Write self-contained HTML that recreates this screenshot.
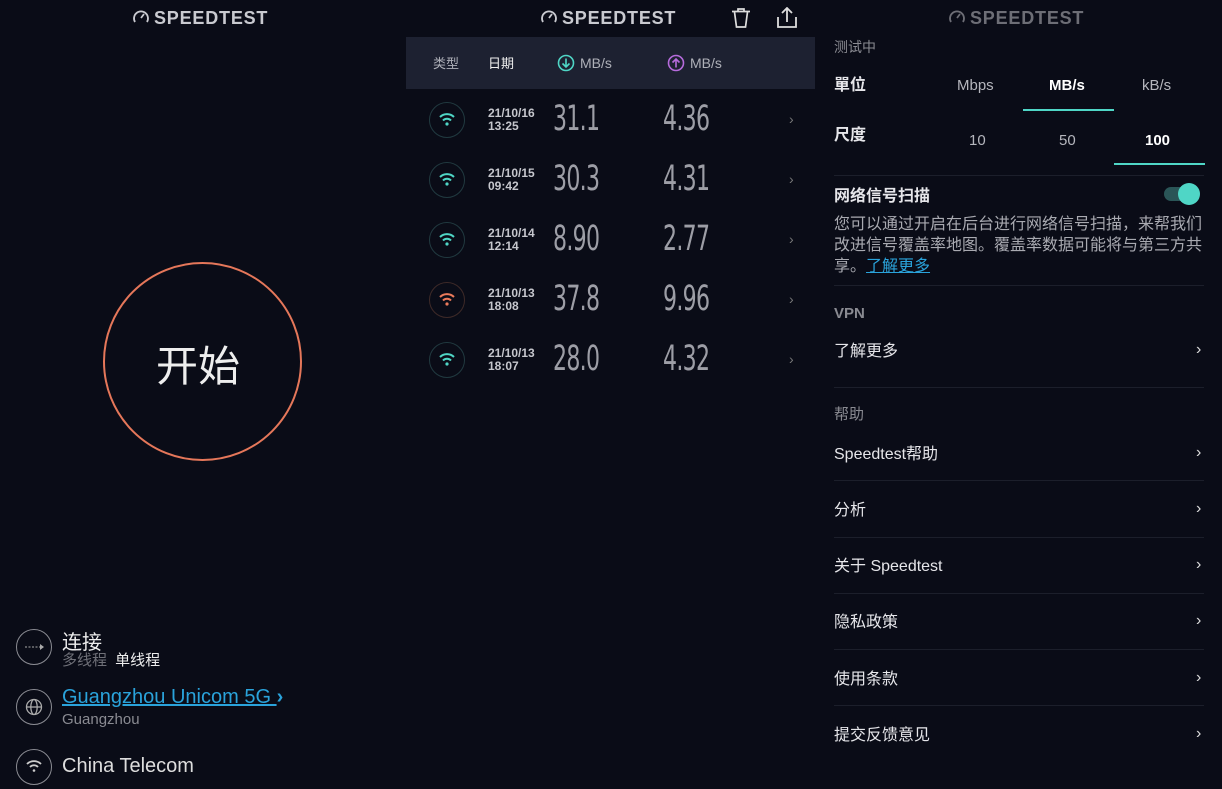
<!DOCTYPE html>
<html><head><meta charset="utf-8"><style>
*{margin:0;padding:0;box-sizing:border-box}
body{width:1222px;height:789px;background:#0a0c17;overflow:hidden;position:relative;font-family:"Liberation Sans","Noto Sans CJK SC",sans-serif;color:#e4e4e8}
.a{position:absolute;white-space:nowrap}
.logo{font-size:18px;font-weight:bold;letter-spacing:.8px;color:#c9cad0}
.hdr{background:#1d2131;left:406px;top:37px;width:409px;height:52px}
.ic{width:36px;height:36px;border-radius:50%;border:1.5px solid #26343c}
.date{font-size:12px;font-weight:bold;color:#c6c7cd;line-height:13px}
.num{font-size:35px;color:#9d9ea6;transform:scaleX(.7);transform-origin:left center;font-family:"DejaVu Sans Condensed","Liberation Sans Narrow",sans-serif;letter-spacing:-1px}
.chev{color:#777;font-size:14px}
.sep{position:absolute;left:834px;width:370px;height:1px;background:#1c1f2b}
.it{font-size:16px;color:#e6e6ea}
.rc{color:#ddd;font-size:16px;left:1196px}
.cir{border:1.5px solid #8b8c93;border-radius:50%;width:36px;height:36px}
</style></head><body>

<div class="a logo" style="left:132px;top:8px"><svg width="18" height="18" viewBox="0 0 18 18" style="vertical-align:-2px;margin-right:4px"><path d="M3 14A7 7 0 1 1 15 14" fill="none" stroke="#c9cad0" stroke-width="1.8"/><path d="M9 10L12 6" stroke="#c9cad0" stroke-width="1.8"/></svg>SPEEDTEST</div>
<div class="a logo" style="left:540px;top:8px"><svg width="18" height="18" viewBox="0 0 18 18" style="vertical-align:-2px;margin-right:4px"><path d="M3 14A7 7 0 1 1 15 14" fill="none" stroke="#c9cad0" stroke-width="1.8"/><path d="M9 10L12 6" stroke="#c9cad0" stroke-width="1.8"/></svg>SPEEDTEST</div>
<div class="a logo" style="left:948px;top:8px;color:#6d6e76"><svg width="18" height="18" viewBox="0 0 18 18" style="vertical-align:-2px;margin-right:4px"><path d="M3 14A7 7 0 1 1 15 14" fill="none" stroke="#6d6e76" stroke-width="1.8"/><path d="M9 10L12 6" stroke="#6d6e76" stroke-width="1.8"/></svg>SPEEDTEST</div>
<svg class="a" style="left:731px;top:7px" width="20" height="22" viewBox="0 0 20 22"><path d="M1 4.5H19M7 4V2H13V4M3.5 5L5.5 20H14.5L16.5 5" fill="none" stroke="#ddd" stroke-width="1.7"/></svg>
<svg class="a" style="left:776px;top:7px" width="22" height="22" viewBox="0 0 22 22"><path d="M2 10V20H20V10M11 15V2M6 6L11 1L16 6" fill="none" stroke="#ddd" stroke-width="1.8"/></svg>

<div class="a" style="left:103px;top:262px;width:199px;height:199px;border:2px solid #e5775a;border-radius:50%"></div>
<div class="a" style="left:156px;top:333px;font-size:42px;color:#eee">开始</div>

<div class="a cir" style="left:16px;top:629px"></div>
<svg class="a" style="left:24px;top:643px" width="22" height="8"><path d="M1 4H18" stroke="#aaa" stroke-dasharray="2 1.5"/><path d="M16 1L20 4L16 7Z" fill="#aaa"/></svg>
<div class="a" style="left:62px;top:626px;font-size:20px;color:#eee">连接</div>
<div class="a" style="left:62px;top:649px;font-size:15px;color:#6f7078">多线程 <span style="color:#eee;margin-left:4px">单线程</span></div>

<div class="a cir" style="left:16px;top:689px"></div>
<svg class="a" style="left:25px;top:698px" width="18" height="18" viewBox="0 0 18 18" fill="none" stroke="#aaa" stroke-width="1.3"><circle cx="9" cy="9" r="7.5"/><ellipse cx="9" cy="9" rx="3.2" ry="7.5"/><path d="M1.5 9H16.5"/></svg>
<div class="a" style="left:62px;top:686px;font-size:20px;color:#2aa3db;text-decoration:underline">Guangzhou Unicom 5G <span style="text-decoration:none;display:inline-block;font-weight:bold">›</span></div>
<div class="a" style="left:62px;top:711px;font-size:15px;color:#8a8b92">Guangzhou</div>

<div class="a cir" style="left:16px;top:749px"></div>
<svg class="a" style="left:24px;top:757px" width="20" height="18" viewBox="0 0 20 18" fill="none" stroke="#ccc" stroke-width="1.8"><path d="M3 7A10 10 0 0 1 17 7M6 10A5.5 5.5 0 0 1 14 10"/><circle cx="10" cy="13.5" r="1.3" fill="#ccc" stroke="none"/></svg>
<div class="a" style="left:62px;top:755px;font-size:20px;color:#ddd">China Telecom</div>

<div class="a hdr"></div>
<div class="a" style="left:433px;top:53px;font-size:13px;color:#aeb0b8">类型</div>
<div class="a" style="left:488px;top:53px;font-size:13px;color:#eee">日期</div>
<svg class="a" style="left:557px;top:54px" width="18" height="18" viewBox="0 0 18 18" fill="none" stroke="#4fd6c6" stroke-width="1.6"><circle cx="9" cy="9" r="7.5"/><path d="M9 4.5V13M5.5 9.5L9 13L12.5 9.5"/></svg>
<div class="a" style="left:580px;top:55px;font-size:14px;color:#aeb0b8">MB/s</div>
<svg class="a" style="left:667px;top:54px" width="18" height="18" viewBox="0 0 18 18" fill="none" stroke="#b66bdc" stroke-width="1.6"><circle cx="9" cy="9" r="7.5"/><path d="M9 13.5V5M5.5 8.5L9 5L12.5 8.5"/></svg>
<div class="a" style="left:690px;top:55px;font-size:14px;color:#aeb0b8">MB/s</div>

<div id="rows"></div>
<script>
var d=[["21/10/16","13:25","31.1","4.36","#4fd6c6","#213a40"],["21/10/15","09:42","30.3","4.31","#4fd6c6","#213a40"],["21/10/14","12:14","8.90","2.77","#4fd6c6","#213a40"],["21/10/13","18:08","37.8","9.96","#ec7a5b","#3e2a28"],["21/10/13","18:07","28.0","4.32","#4fd6c6","#213a40"]];
var h="";d.forEach(function(r,i){var y=120+i*60;
h+='<div class="a ic" style="left:429px;top:'+(y-18)+'px;border-color:'+r[5]+'"></div>';
h+='<svg class="a" style="left:437px;top:'+(y-10)+'px" width="20" height="18" viewBox="0 0 20 18" fill="none" stroke="'+r[4]+'" stroke-width="2"><path d="M3 7A10 10 0 0 1 17 7M6 10.5A5.5 5.5 0 0 1 14 10.5"/><circle cx="10" cy="14" r="1.6" fill="'+r[4]+'" stroke="none"/></svg>';
h+='<div class="a date" style="left:488px;top:'+(y-13)+'px">'+r[0]+'<br>'+r[1]+'</div>';
h+='<div class="a num" style="left:553px;top:'+(y-21)+'px">'+r[2]+'</div>';
h+='<div class="a num" style="left:663px;top:'+(y-21)+'px">'+r[3]+'</div>';
h+='<div class="a chev" style="left:789px;top:'+(y-9)+'px">›</div>';});
document.getElementById("rows").innerHTML=h;
</script>

<div class="a" style="left:834px;top:37px;font-size:14px;color:#8a8b92">测试中</div>
<div class="a" style="left:834px;top:71px;font-size:16px;font-weight:bold;color:#e6e6ea">單位</div>
<div class="a" style="left:957px;top:77px;font-size:15px;color:#b5b6bd">Mbps</div>
<div class="a" style="left:1049px;top:77px;font-size:15px;color:#fff;font-weight:bold">MB/s</div>
<div class="a" style="left:1142px;top:77px;font-size:15px;color:#b5b6bd">kB/s</div>
<div class="a" style="left:1023px;top:109px;width:91px;height:2px;background:#4fd6c6"></div>
<div class="a" style="left:834px;top:121px;font-size:16px;font-weight:bold;color:#e6e6ea">尺度</div>
<div class="a" style="left:969px;top:132px;font-size:15px;color:#b5b6bd">10</div>
<div class="a" style="left:1059px;top:132px;font-size:15px;color:#b5b6bd">50</div>
<div class="a" style="left:1145px;top:132px;font-size:15px;color:#fff;font-weight:bold">100</div>
<div class="a" style="left:1114px;top:163px;width:91px;height:2px;background:#4fd6c6"></div>
<div class="sep" style="top:175px"></div>
<div class="a it" style="left:834px;top:182px;font-weight:bold">网络信号扫描</div>
<div class="a" style="left:1164px;top:187px;width:32px;height:14px;border-radius:7px;background:#2a5557"></div>
<div class="a" style="left:1178px;top:183px;width:22px;height:22px;border-radius:50%;background:#4fd6c6"></div>
<div class="a" style="left:834px;top:214px;font-size:16px;line-height:21px;color:#a9aab1;white-space:normal;width:372px">您可以通过开启在后台进行网络信号扫描，来帮我们改进信号覆盖率地图。覆盖率数据可能将与第三方共享。<span style="color:#2aa3db;text-decoration:underline">了解更多</span></div>
<div class="sep" style="top:285px"></div>
<div class="a" style="left:834px;top:305px;font-size:15px;font-weight:bold;color:#8a8b92">VPN</div>
<div class="a it" style="left:834px;top:337px">了解更多</div><div class="a rc" style="top:341px">›</div>
<div class="sep" style="top:387px"></div>
<div class="a" style="left:834px;top:403px;font-size:15px;color:#8a8b92">帮助</div>
<div class="a it" style="left:834px;top:440px">Speedtest帮助</div><div class="a rc" style="top:444px">›</div>
<div class="sep" style="top:480px"></div>
<div class="a it" style="left:834px;top:496px">分析</div><div class="a rc" style="top:500px">›</div>
<div class="sep" style="top:537px"></div>
<div class="a it" style="left:834px;top:552px">关于 Speedtest</div><div class="a rc" style="top:556px">›</div>
<div class="sep" style="top:593px"></div>
<div class="a it" style="left:834px;top:608px">隐私政策</div><div class="a rc" style="top:612px">›</div>
<div class="sep" style="top:649px"></div>
<div class="a it" style="left:834px;top:665px">使用条款</div><div class="a rc" style="top:669px">›</div>
<div class="sep" style="top:705px"></div>
<div class="a it" style="left:834px;top:721px">提交反馈意见</div><div class="a rc" style="top:725px">›</div>
</body></html>
